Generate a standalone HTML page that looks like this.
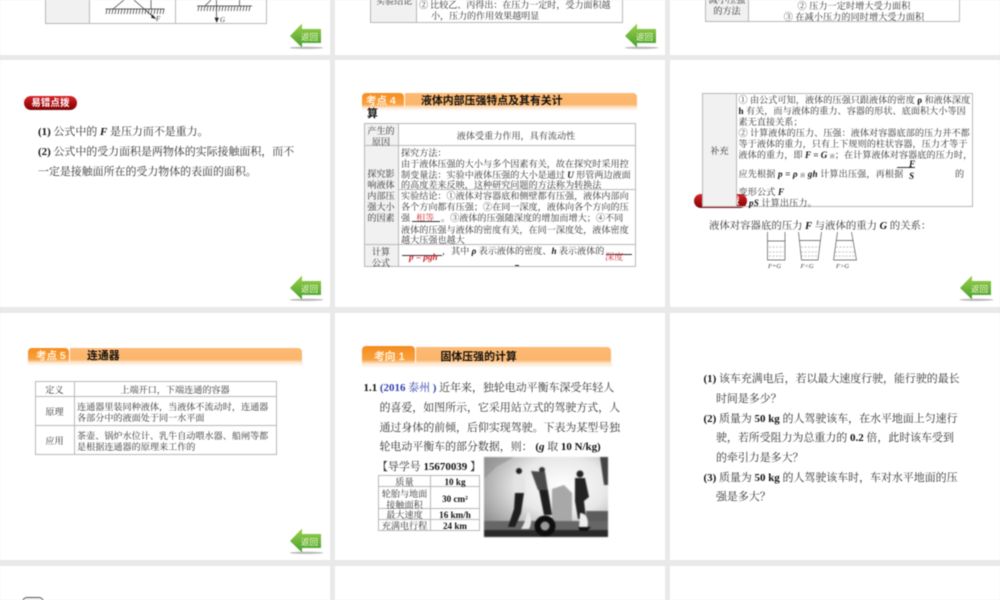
<!DOCTYPE html>
<html lang="zh"><head><meta charset="utf-8"><title>液体压强</title>
<style>
html,body{margin:0;padding:0;width:1000px;height:600px;overflow:hidden;background:#e9e9e9}
#w{position:relative;width:1000px;height:600px;overflow:hidden;filter:blur(.45px);font-family:"Liberation Serif","Noto Serif CJK SC",serif;color:#333}
.p{position:absolute;background:#fff}
.l,.m,.c{position:absolute;white-space:nowrap;line-height:14px;height:14px;margin-top:.7px}
.l{font-size:10.95px}
.m{font-size:9.12px}
.c{font-size:9.12px;transform:translateX(-50%)}
b{font-family:"Liberation Serif",serif;color:#111}
i{font-family:"Liberation Serif",serif;font-weight:bold;color:#111}
.r{color:#d8353a}
.b{position:absolute;background:#b8b8b8}
.g{position:absolute;background:#f1f1f1}
.tab{position:absolute;background:linear-gradient(#f58d1f,#f9a040 80%,#fbd9ae);border-radius:4px 4px 0 0}
.bar{position:absolute;background:linear-gradient(#fdba74,#fcb56b 82%,#fde3c6);border-radius:0 4px 0 0}
.fade{position:absolute;background:linear-gradient(#fbe3c8,#fff)}
.tt{position:absolute;white-space:nowrap;font-family:"Liberation Sans","Noto Sans CJK SC",sans-serif;font-weight:bold;line-height:14px;height:14px}
.back{position:absolute;width:34px;height:26px}
.bt{position:absolute;white-space:nowrap;font:8.5px/14px "Liberation Sans","Noto Sans CJK SC",sans-serif;color:#eaf6d4}
.badge{position:absolute;width:53px;height:14px;border-radius:7px;background:linear-gradient(#d8282c,#a80d10 55%,#7e0608);color:#fff;font:bold 9.4px/14px "Liberation Sans","Noto Sans CJK SC",sans-serif;text-align:center;letter-spacing:.2px}
svg{position:absolute;overflow:visible}
</style></head><body><div id="w">

<svg width="0" height="0" style="position:absolute"><defs>
<linearGradient id="gr" x1="0" y1="0" x2="0" y2="1"><stop offset="0" stop-color="#9ed04a"/><stop offset="1" stop-color="#45a02e"/></linearGradient>
<g id="bk"><ellipse cx="16.500" cy="24.800" rx="17" ry="1.200" fill="#bbb"/><path d="M0 13 L12 0.500 V6 H31 V20 H12 V24.500 Z" fill="url(#gr)"/></g>
</defs></svg>

<!-- panels -->
<div class="p" style="left:0;top:0;width:330px;height:55px"></div>
<div class="p" style="left:335px;top:0;width:330px;height:55px"></div>
<div class="p" style="left:670px;top:0;width:330px;height:55px"></div>
<div class="p" style="left:0;top:60px;width:330px;height:247px"></div>
<div class="p" style="left:335px;top:60px;width:330px;height:247px"></div>
<div class="p" style="left:670px;top:60px;width:330px;height:247px"></div>
<div class="p" style="left:0;top:313px;width:330px;height:247px"></div>
<div class="p" style="left:335px;top:313px;width:330px;height:247px"></div>
<div class="p" style="left:670px;top:313px;width:330px;height:247px"></div>
<div class="p" style="left:0;top:566px;width:330px;height:34px"></div>
<div class="p" style="left:335px;top:566px;width:330px;height:34px"></div>
<div class="p" style="left:670px;top:566px;width:330px;height:34px"></div>

<!-- R1 C1 -->
<div class="g" style="left:46px;top:0;width:44px;height:23px"></div>
<div class="b" style="left:45px;top:0;width:1px;height:24px"></div>
<div class="b" style="left:89px;top:0;width:1px;height:24px"></div>
<div class="b" style="left:175px;top:0;width:1px;height:24px"></div>
<div class="b" style="left:266px;top:0;width:1px;height:24px"></div>
<div class="b" style="left:45px;top:23px;width:222px;height:1px"></div>
<svg style="left:0;top:0" width="330" height="30" fill="none" stroke="#333" stroke-width=".7">
<path d="M105.500 9H164.500M197 6H252"/>
<path d="M107 9l-1 5M110 9l-1 5M113 9l-1 5M116 9l-1 5M119 9l-1 5M122 9l-1 5M125 9l-1 5M128 9l-1 5M131 9l-1 5M134 9l-1 5M137 9l-1 5M140 9l-1 5M143 9l-1 5M146 9l-1 5M149 9l-1 5M152 9l-1 5M155 9l-1 5M158 9l-1 5M161 9l-1 5M164 9l-1 5"/>
<path d="M199 6l-1 5M202 6l-1 5M205 6l-1 5M208 6l-1 5M211 6l-1 5M214 6l-1 5M217 6l-1 5M220 6l-1 5M223 6l-1 5M226 6l-1 5M229 6l-1 5M232 6l-1 5M235 6l-1 5M238 6l-1 5M241 6l-1 5M244 6l-1 5M247 6l-1 5M250 6l-1 5"/>
<path d="M113 9L124 0M134 0L150 14M151 0V9M205 6L211 0M216.500 0V19M239.500 0V6"/>
<path d="M150 14L155 18" stroke-width="1"/>
<path d="M152.500 15L155.500 18.500L151.500 17.500Z" fill="#222"/>
<path d="M215 18H218.500L216.700 22Z" fill="#222"/>
</svg>
<span class="l" style="left:156px;top:11px;font:italic 7px/14px 'Liberation Serif',serif">F</span>
<span class="l" style="left:220px;top:12px;font:italic 7px/14px 'Liberation Serif',serif">G</span>
<svg class="back" style="left:290px;top:23px"><use href="#bk"/></svg>
<span class="bt" style="left:301px;top:29.500px">返回</span>

<!-- R1 C2 -->
<div class="g" style="left:371px;top:0;width:46px;height:22px"></div>
<div class="b" style="left:370px;top:0;width:1px;height:23px"></div>
<div class="b" style="left:416px;top:0;width:1px;height:23px"></div>
<div class="b" style="left:622px;top:0;width:1px;height:23px"></div>
<div class="b" style="left:370px;top:22px;width:253px;height:1px"></div>
<span class="m" style="left:376px;top:-7px">实验结论</span>
<span class="m" style="left:419px;top:-3px;letter-spacing:-.1px">② 比较乙、丙得出&#65306;在压力一定时&#65292;受力面积越</span>
<span class="m" style="left:431px;top:8px;letter-spacing:-.1px">小&#65292;压力的作用效果越明显</span>
<svg class="back" style="left:625px;top:23px"><use href="#bk"/></svg>
<span class="bt" style="left:636px;top:29.500px">返回</span>

<!-- R1 C3 -->
<div class="g" style="left:706px;top:0;width:42px;height:21px"></div>
<div class="b" style="left:705px;top:0;width:1px;height:22px"></div>
<div class="b" style="left:748px;top:0;width:1px;height:22px"></div>
<div class="b" style="left:959px;top:0;width:1px;height:22px"></div>
<div class="b" style="left:705px;top:21px;width:255px;height:1px"></div>
<span class="c" style="left:727px;top:-8px">减小压强</span>
<span class="c" style="left:727px;top:3px">的方法</span>
<span class="c" style="left:854px;top:-2px;letter-spacing:.1px">② 压力一定时增大受力面积</span>
<span class="c" style="left:854px;top:9px;letter-spacing:.1px">③ 在减小压力的同时增大受力面积</span>

<!-- R2 C1 -->
<div class="badge" style="left:24px;top:96px">易错点拨</div>
<span class="l" style="left:38px;top:124px"><b>(1)</b> 公式中的 <i>F</i> 是压力而不是重力。</span>
<span class="l" style="left:38px;top:144px"><b>(2)</b> 公式中的受力面积是两物体的实际接触面积&#65292;而不</span>
<span class="l" style="left:38px;top:164px">一定是接触面所在的受力物体的表面的面积。</span>
<svg class="back" style="left:290px;top:275px"><use href="#bk"/></svg>
<span class="bt" style="left:301px;top:281.500px">返回</span>

<!-- R2 C2 -->
<div class="tab" style="left:362px;top:92.500px;width:42px;height:14.500px"></div>
<div class="bar" style="left:405px;top:92.500px;width:232px;height:14.500px"></div>
<div class="fade" style="left:362px;top:107px;width:275px;height:4px"></div>
<span class="tt" style="left:366px;top:94px;font-size:10.500px;color:#fff3e0">考点 4</span>
<span class="tt" style="left:421px;top:94px;font-size:10.900px;color:#111">液体内部压强特点及其有关计</span>
<span class="tt" style="left:367px;top:107px;font-size:10.900px;color:#111">算</span>

<div class="g" style="left:365px;top:124px;width:33px;height:142px"></div>
<div class="b" style="left:364px;top:123px;width:272px;height:1px"></div>
<div class="b" style="left:364px;top:145px;width:272px;height:1px"></div>
<div class="b" style="left:398px;top:189px;width:238px;height:1px"></div>
<div class="b" style="left:364px;top:244px;width:272px;height:1px"></div>
<div class="b" style="left:364px;top:266px;width:272px;height:1px"></div>
<div class="b" style="left:364px;top:123px;width:1px;height:144px"></div>
<div class="b" style="left:398px;top:123px;width:1px;height:144px"></div>
<div class="b" style="left:635px;top:123px;width:1px;height:144px"></div>

<span class="c" style="left:381px;top:123px">产生的</span>
<span class="c" style="left:381px;top:134px">原因</span>
<span class="c" style="left:516px;top:128px">液体受重力作用&#65292;具有流动性</span>
<span class="m" style="left:401px;top:145px">探究方法&#65306;</span>
<span class="m" style="left:401px;top:156px">由于液体压强的大小与多个因素有关&#65292;故在探究时采用控</span>
<span class="m" style="left:401px;top:167px">制变量法&#65306;实验中液体压强的大小是通过 <i>U</i> 形管两边液面</span>
<span class="m" style="left:401px;top:177px">的高度差来反映&#65292;这种研究问题的方法称为转换法</span>
<span class="c" style="left:381px;top:166px">探究影</span>
<span class="c" style="left:381px;top:177px">响液体</span>
<span class="c" style="left:381px;top:188px">内部压</span>
<span class="c" style="left:381px;top:199px">强大小</span>
<span class="c" style="left:381px;top:210px">的因素</span>
<span class="m" style="left:401px;top:188px">实验结论&#65306;①液体对容器底和侧壁都有压强&#65292;液体内部向</span>
<span class="m" style="left:401px;top:199px">各个方向都有压强&#65307;②在同一深度&#65292;液体向各个方向的压</span>
<span class="m" style="left:401px;top:210px">强</span>
<span class="m r" style="left:416px;top:210px">相等</span>
<div style="position:absolute;left:412px;top:221px;width:28px;height:1px;background:#333"></div>
<span class="m" style="left:441px;top:210px">。③液体的压强随深度的增加而增大&#65307;④不同</span>
<span class="m" style="left:401px;top:222px">液体的压强与液体的密度有关&#65292;在同一深度处&#65292;液体密度</span>
<span class="m" style="left:401px;top:232px">越大压强也越大</span>
<span class="c" style="left:381px;top:244px">计算</span>
<span class="c" style="left:381px;top:255px">公式</span>
<div style="position:absolute;left:402px;top:255px;width:40px;height:1px;background:#333"></div>
<span class="m r" style="left:409px;top:249px;font-family:'Liberation Serif',serif;font-weight:bold;font-style:italic;color:#d01f28">p = ρgh</span>
<span class="m" style="left:442px;top:243px">&#65292;其中 <i>ρ</i> 表示液体的密度、<i>h</i> 表示液体的</span>
<div style="position:absolute;left:606px;top:254px;width:26px;height:1px;background:#333"></div>
<span class="m r" style="left:605px;top:249px">深度</span>
<div style="position:absolute;left:515px;top:265px;width:4px;height:1px;background:#222"></div>

<!-- R2 C3 -->
<div class="badge" style="left:694px;top:193.500px">易错点拨</div>
<div class="g" style="left:703px;top:94px;width:33px;height:113px"></div>
<div class="b" style="left:702px;top:93px;width:271px;height:1px"></div>
<div class="b" style="left:702px;top:206px;width:271px;height:1px"></div>
<div class="b" style="left:702px;top:93px;width:1px;height:114px"></div>
<div class="b" style="left:736px;top:93px;width:1px;height:114px"></div>
<div class="b" style="left:972px;top:93px;width:1px;height:114px"></div>
<span class="c" style="left:719.500px;top:143px">补充</span>
<span class="m" style="left:738.500px;top:92px;letter-spacing:.05px">① 由公式可知&#65292;液体的压强只跟液体的密度 <b>ρ</b> 和液体深度</span>
<span class="m" style="left:738.500px;top:103px;letter-spacing:.05px"><b>h</b> 有关&#65292;而与液体的重力、容器的形状、底面积大小等因</span>
<span class="m" style="left:738.500px;top:114px;letter-spacing:.05px">素无直接关系&#65307;</span>
<span class="m" style="left:738.500px;top:125px;letter-spacing:.05px">② 计算液体的压力、压强&#65306;液体对容器底部的压力并不都</span>
<span class="m" style="left:738.500px;top:136px;letter-spacing:.05px">等于液体的重力&#65292;只有上下规则的柱状容器&#65292;压力才等于</span>
<span class="m" style="left:738.500px;top:147px;letter-spacing:.05px">液体的重力&#65292;即 <i>F = G</i> <span style="font-size:5px">液</span>&#65307;在计算液体对容器底的压力时&#65292;</span>
<span class="m" style="left:738.500px;top:166px;letter-spacing:.15px">应先根据 <i>p = ρ</i> <span style="font-size:5px">液</span> <i>gh</i> 计算出压强&#65292;再根据</span>
<div style="position:absolute;left:897px;top:167px;width:18px;height:1px;background:#333"></div>
<span class="m" style="left:909px;top:156px"><i>F</i></span>
<span class="m" style="left:909px;top:168px"><i>S</i></span>
<span class="m" style="left:955px;top:166px">的</span>
<span class="m" style="left:738.500px;top:184px;letter-spacing:.15px">变形公式 <i>F</i></span>
<span class="m" style="left:749px;top:195px;letter-spacing:.15px"><i>pS</i> 计算出压力。</span>
<span class="l" style="left:709px;top:219px;font-size:10.400px">液体对容器底的压力 <i>F</i> 与液体的重力 <i>G</i> 的关系&#65306;</span>
<svg style="left:760px;top:228px" width="110" height="40" fill="none" stroke="#555" stroke-width=".7">
<path d="M7.500 4V32H25V4M7.500 13H25"/>
<path d="M38.500 4L41.500 32H58L61.500 4M39.500 12.500H60.500"/>
<path d="M73.500 32L77.500 4M91.500 4L96.500 32H73.500M76 12.500H93"/>
<path d="M9 19H24M9 24H24M9 28H24M41 19H59M41 24H59M41 28H58M76 19H94M75 24H95M75 28H96" stroke-dasharray="2 1.500" stroke="#888" stroke-width=".5"/>
</svg>
<span class="m" style="left:768px;top:259px;font:italic 6.500px/14px 'Liberation Serif',serif">F=G</span>
<span class="m" style="left:800.500px;top:259px;font:italic 6.500px/14px 'Liberation Serif',serif">F&lt;G</span>
<span class="m" style="left:836px;top:259px;font:italic 6.500px/14px 'Liberation Serif',serif">F&gt;G</span>
<svg class="back" style="left:960px;top:275px"><use href="#bk"/></svg>
<span class="bt" style="left:971px;top:281.500px">返回</span>

<!-- R3 C1 -->
<div class="tab" style="left:27.500px;top:347.500px;width:41px;height:14px"></div>
<div class="bar" style="left:70px;top:347.500px;width:232px;height:14px"></div>
<div class="fade" style="left:27.500px;top:361.500px;width:275px;height:4px"></div>
<span class="tt" style="left:36px;top:349px;font-size:10.500px;color:#fff3e0">考点 5</span>
<span class="tt" style="left:87px;top:349px;font-size:10.900px;color:#111">连通器</span>
<div class="b" style="left:35px;top:381px;width:242px;height:1px"></div>
<div class="b" style="left:35px;top:396px;width:242px;height:1px"></div>
<div class="b" style="left:35px;top:425px;width:242px;height:1px"></div>
<div class="b" style="left:35px;top:454px;width:242px;height:1px"></div>
<div class="b" style="left:35px;top:381px;width:1px;height:74px"></div>
<div class="b" style="left:74px;top:381px;width:1px;height:74px"></div>
<div class="b" style="left:276px;top:381px;width:1px;height:74px"></div>
<span class="c" style="left:54.500px;top:382px">定义</span>
<span class="c" style="left:175px;top:382px">上端开口&#65292;下端连通的容器</span>
<span class="c" style="left:54.500px;top:404px">原理</span>
<span class="m" style="left:77px;top:399px">连通器里装同种液体&#65292;当液体不流动时&#65292;连通器</span>
<span class="m" style="left:77px;top:410px">各部分中的液面处于同一水平面</span>
<span class="c" style="left:54.500px;top:433px">应用</span>
<span class="m" style="left:77px;top:428px">茶壶、锅炉水位计、乳牛自动喂水器、船闸等都</span>
<span class="m" style="left:77px;top:439px">是根据连通器的原理来工作的</span>
<svg class="back" style="left:290px;top:528px"><use href="#bk"/></svg>
<span class="bt" style="left:301px;top:534.500px">返回</span>

<!-- R3 C2 -->
<div class="tab" style="left:361.500px;top:346px;width:53px;height:16.500px"></div>
<div class="bar" style="left:416px;top:346.500px;width:195px;height:16px"></div>
<div class="fade" style="left:361.500px;top:362.500px;width:250px;height:5px"></div>
<span class="tt" style="left:374px;top:349.500px;font-size:10.800px;color:#fff3e0">考向 1</span>
<span class="tt" style="left:440.500px;top:349.500px;font-size:10.900px;color:#111">固体压强的计算</span>
<span class="l" style="left:363.500px;top:380px"><b>1.1</b> <span style="color:#2f3fb0"><b style="color:#2f3fb0">(2016</b> 泰州 <b style="color:#2f3fb0">)</b></span> 近年来&#65292;独轮电动平衡车深受年轻人</span>
<span class="l" style="left:379.500px;top:400px">的喜爱&#65292;如图所示&#65292;它采用站立式的驾驶方式&#65292;人</span>
<span class="l" style="left:379.500px;top:420px">通过身体的前倾&#65292;后仰实现驾驶。下表为某型号独</span>
<span class="l" style="left:379.500px;top:439px">轮电动平衡车的部分数据&#65292;则&#65306; <b>(<i>g</i></b> 取 <b>10 N/kg)</b></span>
<span class="l" style="left:377px;top:459px">【导学号 <b>15670039</b> 】</span>
<div class="b" style="left:378px;top:475px;width:102px;height:1px"></div>
<div class="b" style="left:378px;top:486px;width:102px;height:1px"></div>
<div class="b" style="left:378px;top:508px;width:102px;height:1px"></div>
<div class="b" style="left:378px;top:519px;width:102px;height:1px"></div>
<div class="b" style="left:378px;top:530px;width:102px;height:1px"></div>
<div class="b" style="left:378px;top:475px;width:1px;height:56px"></div>
<div class="b" style="left:430px;top:475px;width:1px;height:56px"></div>
<div class="b" style="left:479px;top:475px;width:1px;height:56px"></div>
<span class="c" style="left:404.500px;top:474px">质量</span>
<span class="c" style="left:404.500px;top:486px">轮胎与地面</span>
<span class="c" style="left:404.500px;top:497px">接触面积</span>
<span class="c" style="left:404.500px;top:507px">最大速度</span>
<span class="c" style="left:404.500px;top:518px">充满电行程</span>
<span class="c" style="left:455px;top:474px;font-family:'Liberation Serif',serif;font-weight:bold;color:#111">10 kg</span>
<span class="c" style="left:455px;top:491px;font-family:'Liberation Serif',serif;font-weight:bold;color:#111">30 cm²</span>
<span class="c" style="left:455px;top:507px;font-family:'Liberation Serif',serif;font-weight:bold;color:#111">16 km/h</span>
<span class="c" style="left:455px;top:518px;font-family:'Liberation Serif',serif;font-weight:bold;color:#111">24 km</span>
<svg style="left:484px;top:457px;filter:blur(.5px)" width="124" height="80" viewBox="0 0 124 80">
<defs>
<radialGradient id="sk" cx=".63" cy=".36" r=".8"><stop offset="0" stop-color="#fff"/><stop offset=".45" stop-color="#e8e8e8"/><stop offset="1" stop-color="#858585"/></radialGradient>
<clipPath id="cp"><rect width="124" height="80"/></clipPath>
</defs>
<g clip-path="url(#cp)">
<rect width="124" height="80" fill="url(#sk)"/>
<path d="M0 0H30L12 10L0 22Z" fill="#888" opacity=".5"/>
<path d="M116 0H124V28H120Z" fill="#444"/>
<path d="M68 32L80 28L88 36V64H68Z" fill="#a8a8a8"/>
<path d="M102 54H124V66H102Z" fill="#5c5c5c"/>
<rect y="64" width="124" height="16" fill="#666"/>
<rect y="73" width="124" height="7" fill="#2a2a2a"/>
<circle cx="35" cy="14" r="3" fill="#222"/>
<path d="M30 18L40 18L42 36L30 37Z" fill="#e4e4e4"/>
<path d="M31 36H40L37 56L31 70H24L30 52Z" fill="#1e1e1e"/>
<path d="M44 54C48 60 48 67 45 72L37 72C41 66 42 60 44 54Z" fill="#e8e8e8"/>
<circle cx="58" cy="13" r="3" fill="#333"/>
<path d="M47 14L61 15L64 34L54 33Z" fill="#4a4a4a"/>
<path d="M55 33H64L68 58H60Z" fill="#1e1e1e"/>
<circle cx="61" cy="69" r="10.500" fill="#0e0e0e"/><circle cx="61" cy="69" r="4.500" fill="#999"/>
<circle cx="96" cy="17" r="3.500" fill="#222"/>
<path d="M91 21H101L105 40L100 44L102 62H94L91 44Z" fill="#222"/>
<path d="M96 56C104 56 105 66 103 71H95Z" fill="#eee"/>
<path d="M94 70H107L103 74H96Z" fill="#111"/>
</g></svg>

<!-- R3 C3 -->
<span class="l" style="left:703.500px;top:371px"><b>(1)</b> 该车充满电后&#65292;若以最大速度行驶&#65292;能行驶的最长</span>
<span class="l" style="left:716px;top:391px">时间是多少&#65311;</span>
<span class="l" style="left:703.500px;top:411px"><b>(2)</b> 质量为 <b>50 kg</b> 的人驾驶该车&#65292;在水平地面上匀速行</span>
<span class="l" style="left:716px;top:430px">驶&#65292;若所受阻力为总重力的 <b>0.2</b> 倍&#65292;此时该车受到</span>
<span class="l" style="left:716px;top:450px">的牵引力是多大&#65311;</span>
<span class="l" style="left:703.500px;top:470px"><b>(3)</b> 质量为 <b>50 kg</b> 的人驾驶该车时&#65292;车对水平地面的压</span>
<span class="l" style="left:716px;top:489px">强是多大&#65311;</span>

<!-- R4 C1 -->
<div style="position:absolute;left:22px;top:597px;width:20px;height:10px;border:1px solid #555;border-radius:5px;background:#f5f5f5"></div>

</div></body></html>
